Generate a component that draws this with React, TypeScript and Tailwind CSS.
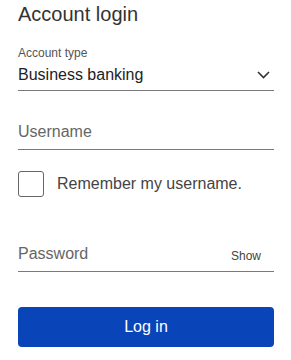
export default function App() {
  return (
    <div className="w-[291px] h-[360px] bg-white px-[18px] font-['Liberation_Sans',Arial,sans-serif] overflow-hidden">
      <h1 className="pt-[3px] text-[20px] leading-[22px] text-[#333]">Account login</h1>

      <div className="mt-[21px] border-b border-[#7a7a7a] w-[256px]">
        <div className="text-[12px] leading-[14px] text-[#555]">Account type</div>
        <div className="flex items-center justify-between h-[25px] mt-[2px] mb-[3px]">
          <span className="text-[16px] text-[#222]">Business banking</span>
          <svg className="mr-[4px]" width="13" height="8" viewBox="0 0 13 8" fill="none">
            <path d="M1 1l5.5 5.5L12 1" stroke="#333" strokeWidth="1.6" />
          </svg>
        </div>
      </div>

      <div className="mt-[31px] border-b border-[#7a7a7a] w-[256px] h-[28px] text-[16px] leading-[20px] text-[#666]">
        Username
      </div>

      <label className="mt-[21px] flex items-center gap-[13px]">
        <span className="w-[26px] h-[26px] border border-[#666] rounded-[3px] bg-white" />
        <span className="text-[16px] text-[#444]">Remember my username.</span>
      </label>

      <div className="mt-[47px] border-b border-[#7a7a7a] w-[256px] h-[28px] flex items-start justify-between">
        <span className="text-[16px] leading-[20px] text-[#666]">Password</span>
        <span className="mt-[5px] mr-[13px] text-[12px] leading-[14px] text-[#444]">Show</span>
      </div>

      <button className="mt-[35px] w-[256px] h-[40px] rounded-[4px] bg-[#0a44b9] text-white text-[16px]">
        Log in
      </button>
    </div>
  );
}
